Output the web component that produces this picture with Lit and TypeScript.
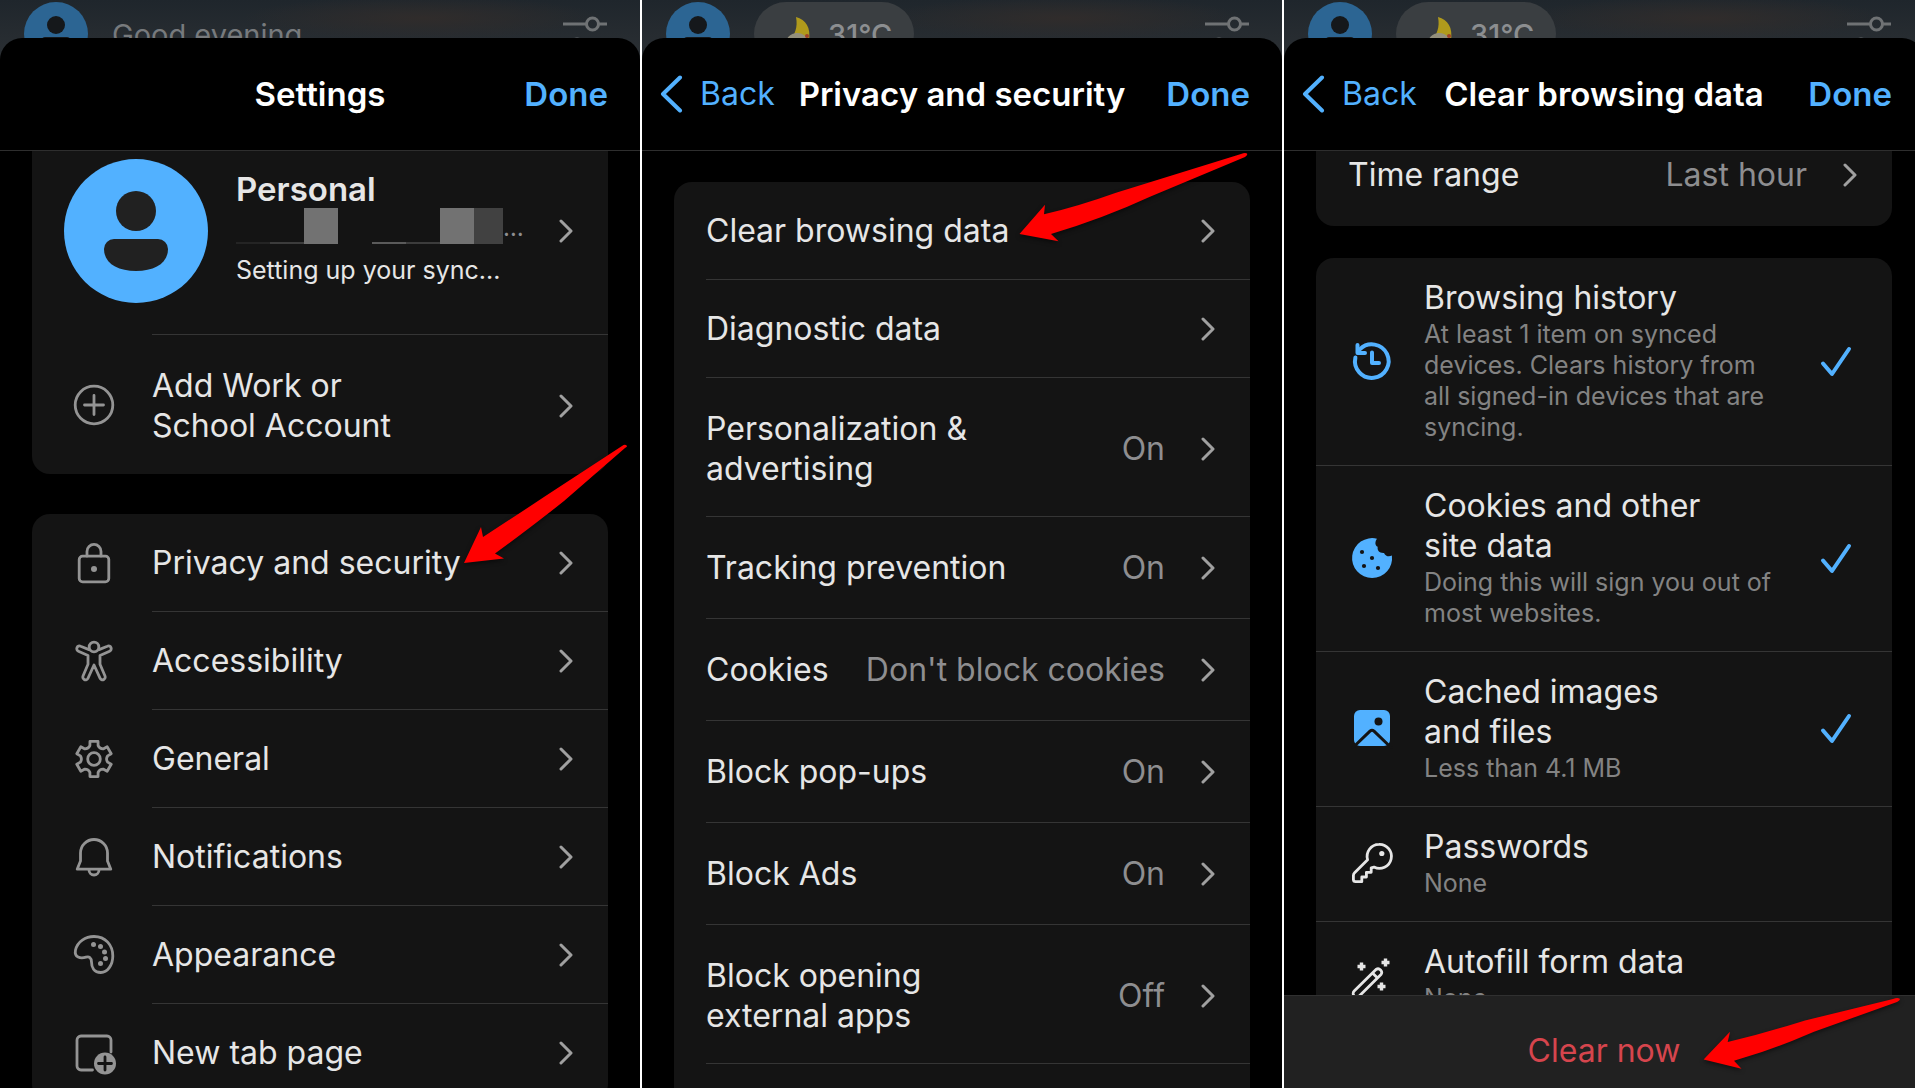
import { LitElement, html, svg, css, nothing } from "lit";
import { customElement, property } from "lit/decorators.js";

type Row = { label: string; icon?: string; value?: string; size?: string };
type Option = { label: string; note: string; icon: string; checked: boolean };

const accounts: Row[] = [{ label: "Add Work or\nSchool Account", icon: "add", size: "double" }];

const settings: Row[] = [
  { label: "Privacy and security", icon: "lock" },
  { label: "Accessibility", icon: "person" },
  { label: "General", icon: "gear" },
  { label: "Notifications", icon: "bell" },
  { label: "Appearance", icon: "palette" },
  { label: "New tab page", icon: "tab" },
];

const privacy: Row[] = [
  { label: "Clear browsing data" },
  { label: "Diagnostic data" },
  { label: "Personalization &\nadvertising", value: "On", size: "double" },
  { label: "Tracking prevention", value: "On", size: "roomy" },
  { label: "Cookies", value: "Don't block cookies", size: "roomy" },
  { label: "Block pop-ups", value: "On", size: "roomy" },
  { label: "Block Ads", value: "On", size: "roomy" },
  { label: "Block opening\nexternal apps", value: "Off", size: "double" },
  { label: "", size: "roomy" },
];

const options: Option[] = [
  {
    label: "Browsing history",
    note: "At least 1 item on synced\ndevices. Clears history from\nall signed-in devices that are\nsyncing.",
    icon: "history",
    checked: true,
  },
  {
    label: "Cookies and other\nsite data",
    note: "Doing this will sign you out of\nmost websites.",
    icon: "cookie",
    checked: true,
  },
  { label: "Cached images\nand files", note: "Less than 4.1 MB", icon: "image", checked: true },
  { label: "Passwords", note: "None", icon: "key", checked: false },
  { label: "Autofill form data", note: "None", icon: "wand", checked: false },
];

const gearPath = (() => {
  const pts: string[] = [];
  const at = (r: number, deg: number) => {
    const a = (deg * Math.PI) / 180;
    return `${(20 + r * Math.sin(a)).toFixed(2)} ${(20 - r * Math.cos(a)).toFixed(2)}`;
  };
  for (let i = 0; i < 6; i++) {
    const d = i * 60;
    pts.push(`${i ? "L" : "M"}${at(18, d - 13)}`, `L${at(18, d + 13)}`, `L${at(14, d + 17)}`);
    pts.push(`Q${at(11.5, d + 30)} ${at(14, d + 43)}`);
  }
  return pts.join("") + "Z";
})();

const glyphs: Record<string, unknown> = {
  add: svg`<circle cx="20" cy="20" r="18.8"/><path d="M20 10.5v19M10.5 20h19"/>`,
  lock: svg`<rect x="5.2" y="13.2" width="29.6" height="25.6" rx="3.4"/><path d="M13 13V8.4a7 7 0 0 1 14 0V13"/><circle class="dot" cx="20" cy="26" r="3"/>`,
  person: svg`<circle cx="20" cy="6" r="4.8"/><path d="M15 8.6 6.6 5.2a2.7 2.7 0 0 0-2.2 5l9.6 4.4v8.6L9 35a2.7 2.7 0 0 0 5 2.2L20 24l6 13.2a2.7 2.7 0 0 0 5-2.2L26 23.2v-8.6l9.6-4.4a2.7 2.7 0 0 0-2.2-5L25 8.6"/>`,
  gear: svg`<path d=${gearPath}/><circle cx="20" cy="20" r="6.3"/>`,
  bell: svg`<path d="M20 2.5a13.5 13.5 0 0 0-13.5 13.5v8L3.2 32.2h33.6L33.5 24v-8A13.5 13.5 0 0 0 20 2.5z"/><path d="M15 33a5 5 0 0 0 10 0"/>`,
  palette: svg`<path d="M1.5 15C3.5 6.5 11.5 1.5 20 1.5 31.5 1.5 38.8 10 38.8 21c0 9-5.300 16.500-12 16.500-7 0-9.300-5.500-9.300-10.500 0-4.500-2.500-5.800-5.500-4.800C6.500 24 0 22.500 1.500 15z"/><g class="dot"><circle cx="19.5" cy="9.5" r="2.5"/><circle cx="26.5" cy="11.5" r="2.5"/><circle cx="30.5" cy="17" r="2.5"/><circle cx="31.5" cy="23.5" r="2.5"/><circle cx="26.5" cy="28.5" r="2.5"/></g>`,
  tab: svg`<path d="M18.5 37H7a4 4 0 0 1-4-4V7a4 4 0 0 1 4-4h26a4 4 0 0 1 4 4v12"/><circle class="dot" cx="31" cy="30.5" r="11"/><path class="cut" d="M31 24v13M24.5 30.5h13"/>`,
  history: svg`<g class="bold"><path d="M3.4 16.5A16.8 16.8 0 1 0 8 8.2l-1.5 1.5"/><path d="M5.5 4v8h7.5"/><path d="M20 11.5V22h7"/></g>`,
  cookie: svg`<path class="dot" d="M25 .7A20 20 0 1 0 39.9 17.5c-2.4 1.5-6.4 1.2-7.9-2.5-4.5.3-7-2.5-6.3-6.2-3.2-1.6-2.6-5.6-.7-8.1z"/><g class="hole"><circle cx="10" cy="14" r="2.1"/><circle cx="20" cy="20" r="2.1"/><circle cx="12" cy="28" r="2.1"/><circle cx="26" cy="30" r="2.1"/></g>`,
  image: svg`<rect class="dot" x="2" y="2" width="36" height="36" rx="6"/><circle class="hole" cx="26.5" cy="13.5" r="4"/><path class="cut thick" d="M1 39.5 18 23.2q2-1.800 4 0L39 39.5"/>`,
  key: svg`<path d="M27 1.4a12 12 0 0 0-11.4 15.4L2.6 29.8a4 4 0 0 0-1.2 2.8V36.5a2.2 2.2 0 0 0 2.2 2.2h6.2V34h4.6v-4.7h4.8v-4.500l2.800-.700A12 12 0 1 0 27 1.400z"/><circle class="dot" cx="29.8" cy="10.5" r="2.6"/>`,
  wand: svg`<path d="M2.2 38a3.6 3.6 0 0 1 0-5L24 11.5a3.6 3.6 0 0 1 5 5L7.3 38a3.6 3.6 0 0 1-5.1 0zM20.5 15l5 5"/><path class="spark" d="M9.5 4.5v8M5.5 8.5h8M33.5.5v8M29.5 4.5h8M29.5 24.5v8M25.5 28.5h8"/>`,
};

const tokens = css`
  :host {
    --card: #141414;
    --line: #353535;
    --text: #e6e6e6;
    --muted: #8e8e90;
    --blue: #52b1ff;
  }
  * {
    box-sizing: border-box;
  }
`;

@customElement("line-icon")
class LineIcon extends LitElement {
  @property() name = "";
  static styles = css`
    :host {
      display: block;
      flex: none;
      width: 40px;
      height: 40px;
    }
    svg {
      display: block;
      overflow: visible;
      fill: none;
      stroke: currentColor;
      stroke-width: 2.8;
      stroke-linejoin: round;
      stroke-linecap: round;
    }
    .dot {
      fill: currentColor;
      stroke: none;
    }
    .hole {
      fill: #141414;
      stroke: none;
    }
    .cut {
      stroke: #141414;
    }
    .thick {
      stroke-width: 3;
    }
    .bold {
      stroke-width: 4;
    }
    .spark {
      stroke-width: 3.4;
      stroke-linecap: butt;
    }
  `;
  render() {
    return html`<svg width="40" height="40" viewBox="0 0 40 40" aria-hidden="true">${glyphs[this.name]}</svg>`;
  }
}

const chevron = html`<svg class="chevron" width="14" height="24" viewBox="0 0 14 24" aria-hidden="true">
  <path d="M2 2l10 10L2 22" fill="none" stroke="#a0a0a0" stroke-width="3" stroke-linecap="round" stroke-linejoin="round" />
</svg>`;

const arrow = (cls: string, w: number, h: number, d: string) => html`<svg
  class="arrow ${cls}"
  width=${w}
  height=${h}
  viewBox="0 0 ${w} ${h}"
  aria-hidden="true"
>
  <path d=${d} fill="#ff0000" />
</svg>`;

@customElement("phone-panel")
class PhonePanel extends LitElement {
  @property() heading = "";
  @property({ type: Boolean }) back = false;
  @property() greeting = "";
  @property() weather = "";

  static styles = [
    tokens,
    css`
      :host {
        display: flex;
        flex-direction: column;
        min-width: 0;
        height: 100%;
        position: relative;
        overflow: hidden;
        background: #000;
      }
      .backdrop {
        flex: none;
        height: 62px;
        margin-bottom: -24px;
        padding: 2px 32px 0 24px;
        display: flex;
        gap: 24px;
        overflow: hidden;
        background: radial-gradient(ellipse 180px 22px at 66% 18px, #302c2b, transparent),
          linear-gradient(#1f262c, #2c3034);
      }
      .avatar {
        flex: none;
      }
      .greeting {
        font-size: 29px;
        line-height: 34px;
        padding-top: 16px;
        color: #777a7d;
        white-space: nowrap;
      }
      .weather {
        display: flex;
        gap: 14px;
        width: 160px;
        height: 64px;
        padding: 15px 0 0 32px;
        border-radius: 32px;
        background: #3a3e41;
        font-size: 29px;
        line-height: 36px;
        font-weight: 500;
        color: #8c8e90;
      }
      .sliders {
        flex: none;
        margin: 12px 0 0 auto;
      }
      header {
        flex: none;
        position: relative;
        height: 113px;
        padding: 0 32px 0 17px;
        display: grid;
        grid-template-columns: 1fr auto 1fr;
        align-items: center;
        background: #000;
        border-bottom: 1px solid #2e2e2e;
        border-radius: 22px 22px 0 0;
      }
      h1 {
        margin: 0 0 0 15px;
        grid-column: 2;
        font-size: 33px;
        line-height: 40px;
        font-weight: 600;
        color: #fff;
        white-space: nowrap;
      }
      button {
        border: 0;
        padding: 0;
        background: none;
        font: inherit;
        font-size: 33px;
        line-height: 40px;
        color: var(--blue);
      }
      .back {
        display: flex;
        align-items: center;
        gap: 17px;
        justify-self: start;
        font-size: 32px;
      }
      .done {
        grid-column: 3;
        justify-self: end;
        font-weight: 600;
      }
      main {
        flex: 1;
        min-height: 0;
        overflow: hidden;
        padding: 0 32px;
      }
    `,
  ];

  render() {
    return html`
      <div class="backdrop">
        <svg class="avatar" width="64" height="64" viewBox="0 0 64 64" aria-hidden="true">
          <circle cx="32" cy="32" r="32" fill="#2c6593" />
          <circle cx="32" cy="23" r="9" fill="#15181b" />
          <path d="M18 38a3 3 0 0 1 3-3h22a3 3 0 0 1 3 3c0 8-6 12-14 12s-14-4-14-12z" fill="#15181b" />
        </svg>
        ${this.greeting ? html`<div class="greeting">${this.greeting}</div>` : nothing}
        ${this.weather
          ? html`<div class="weather">
              <svg width="28" height="36" viewBox="0 0 28 36" aria-hidden="true">
                <path d="M10 0c10 3 15 10 13 24H3C9 18 12 10 10 0z" fill="#b09a1c" />
                <path d="M1 22c4-7 14-8 19-2v16H1z" fill="#94907c" />
                <circle cx="21" cy="19" r="2" fill="#a0402a" />
              </svg>
              <span>${this.weather}</span>
            </div>`
          : nothing}
        <svg class="sliders" width="46" height="40" viewBox="0 0 46 40" fill="none" stroke="#6f7274" stroke-width="3" aria-hidden="true">
          <path d="M1 10h23M37 10h8M1 31h7M21 31h24" />
          <circle cx="30.5" cy="10" r="6" />
          <circle cx="15" cy="31" r="6" />
        </svg>
      </div>
      <header>
        ${this.back
          ? html`<button class="back">
              <svg width="24" height="38" viewBox="0 0 24 38" fill="none" stroke="#52b1ff" stroke-width="4" stroke-linecap="round" stroke-linejoin="round" aria-hidden="true">
                <path d="M21 2.5 4 19l17 16.5" />
              </svg>
              Back
            </button>`
          : nothing}
        <h1>${this.heading}</h1>
        <button class="done">Done</button>
      </header>
      <main><slot></slot></main>
      <slot name="footer"></slot>
      <slot name="overlay"></slot>
    `;
  }
}

@customElement("app-root")
class AppRoot extends LitElement {
  static styles = [
    tokens,
    css`
      :host {
        display: block;
        height: 100vh;
        overflow: hidden;
        background: #fff;
        color: var(--text);
        font-family: Inter, "Liberation Sans", sans-serif;
        font-size: 32px;
        line-height: 40px;
      }
      .panels {
        display: grid;
        grid-template-columns: 640fr 640fr 631fr;
        gap: 2px;
        height: 100%;
      }
      .last {
        margin-right: -9px;
      }
      .card {
        background: var(--card);
        border-radius: 18px;
        overflow: hidden;
      }
      .card + .card {
        margin-top: 40px;
      }
      .under {
        margin-top: -24px;
      }
      .first {
        margin-top: 31px;
      }
      .row {
        display: flex;
        align-items: center;
        width: 100%;
        height: 98px;
        padding: 0 0 0 32px;
        border: 0;
        background: none;
        color: inherit;
        font: inherit;
        text-align: left;
      }
      .body {
        flex: 1;
        height: 100%;
        display: flex;
        align-items: center;
        padding-right: 35px;
        border-bottom: 1px solid var(--line);
      }
      .row:last-child .body {
        border-color: transparent;
      }
      .row.roomy {
        height: 102px;
      }
      .row.double {
        height: 139px;
      }
      .double .body {
        padding-top: 3px;
      }
      .row line-icon {
        margin: 0 38px 0 10px;
        color: #949494;
      }
      .label {
        flex: 1;
        white-space: pre;
      }
      .value {
        color: var(--muted);
        white-space: nowrap;
      }
      .chevron {
        flex: none;
        margin-left: 36px;
      }
      .profile {
        display: grid;
        grid-template-columns: 144px 1fr auto;
        align-items: center;
        column-gap: 28px;
        width: 100%;
        height: 207px;
        padding: 0 35px 0 32px;
        border: 0;
        background: none;
        color: inherit;
        font: inherit;
        text-align: left;
      }
      .profile .chevron {
        margin-left: 0;
      }
      .who {
        display: grid;
        padding-bottom: 5px;
      }
      .name {
        font-size: 33px;
        line-height: 38px;
        font-weight: 600;
      }
      .mail {
        display: flex;
        align-items: flex-start;
        height: 47px;
        font-size: 24px;
        color: var(--muted);
      }
      .sync,
      .note {
        font-size: 25px;
        line-height: 31px;
        white-space: pre;
      }
      .rule {
        height: 1px;
        margin: 0 0 0 120px;
        border: 0;
        background: var(--line);
      }
      .time {
        margin-top: -27px;
      }
      .card.options {
        margin-top: 32px;
      }
      .option {
        display: flex;
        align-items: center;
        padding: 20px 40px 22px 36px;
        border-bottom: 1px solid var(--line);
      }
      .option line-icon {
        margin-right: 32px;
      }
      .checked line-icon,
      .tick {
        color: var(--blue);
      }
      .text {
        flex: 1;
        display: grid;
        gap: 1px;
      }
      .title {
        white-space: pre;
      }
      .note {
        color: #838383;
      }
      input {
        appearance: none;
        width: 0;
        height: 0;
        margin: 0;
      }
      .tick {
        visibility: hidden;
      }
      input:checked + .tick {
        visibility: visible;
      }
      .clear {
        flex: none;
        position: relative;
        height: 93px;
        padding: 18px 0 0;
        border: 0;
        border-top: 1px solid #303030;
        background: #212121;
        color: #d6454d;
        font: inherit;
      }
      .arrow {
        position: absolute;
        overflow: visible;
        filter: drop-shadow(0 2px 2px rgba(0, 0, 0, 0.5));
      }
      .one {
        left: 464px;
        top: 444px;
      }
      .two {
        left: 377px;
        top: 152px;
      }
      .three {
        left: 419px;
        top: 997px;
      }
    `,
  ];

  private row(r: Row) {
    return html`<button class="row ${r.size ?? ""}">
      ${r.icon ? html`<line-icon name=${r.icon}></line-icon>` : nothing}
      <span class="body">
        <span class="label">${r.label}</span>
        ${r.value ? html`<span class="value">${r.value}</span>` : nothing} ${chevron}
      </span>
    </button>`;
  }

  private option(o: Option) {
    return html`<label class="option ${o.checked ? "checked" : ""}">
      <line-icon name=${o.icon}></line-icon>
      <span class="text"><span class="title">${o.label}</span><span class="note">${o.note}</span></span>
      <input type="checkbox" .checked=${o.checked} />
      <svg class="tick" width="32" height="32" viewBox="0 0 32 32" fill="none" stroke="currentColor" stroke-width="4" stroke-linecap="round" stroke-linejoin="round" aria-hidden="true">
        <path d="M3 18.5 12 29 29 4" />
      </svg>
    </label>`;
  }

  render() {
    return html`<div class="panels">
      <phone-panel heading="Settings" greeting="Good evening">
        <section class="card under">
          <button class="profile">
            <svg width="144" height="144" viewBox="0 0 144 144" aria-hidden="true">
              <circle cx="72" cy="72" r="72" fill="#52b1ff" />
              <circle cx="72" cy="52" r="20" fill="#212121" />
              <path d="M40 90a10 10 0 0 1 10-10h44a10 10 0 0 1 10 10c0 14-13 22-32 22s-32-8-32-22z" fill="#212121" />
            </svg>
            <span class="who">
              <span class="name">Personal</span>
              <span class="mail">
                <svg width="267" height="36" viewBox="0 0 267 36" aria-hidden="true">
                  <path d="M0 34h34v2H0z" fill="#242424" />
                  <path d="M34 34h34v2H34zM170 34h34v2H170z" fill="#3c3c3c" />
                  <path d="M136 34h34v2H136z" fill="#5a5a5a" />
                  <path d="M68 0h34v36H68zM204 0h34v36H204z" fill="#727272" />
                  <path d="M238 0h29v36H238z" fill="#414141" />
                </svg>
                <span>…</span>
              </span>
              <span class="sync">Setting up your sync...</span>
            </span>
            ${chevron}
          </button>
          <hr class="rule" />
          ${accounts.map((r) => this.row(r))}
        </section>
        <section class="card">${settings.map((r) => this.row(r))}</section>
        <div slot="overlay">
          ${arrow("one", 164, 118, "M162.5 1.5Q161 0 158 2L83 51Q50 73 19 93L17 83 0 119 40 114.6 31 109.6Q70 81 100 57L161 4Q164 2.5 162.5 1.5z")}
        </div>
      </phone-panel>

      <phone-panel heading="Privacy and security" weather="31°C" back>
        <section class="card first">${privacy.map((r) => this.row(r))}</section>
        <div slot="overlay">
          ${arrow("two", 230, 92, "M228 1.5Q226 .5 222 2L97 40.7Q60 54 25 62.3L26 52.7 .5 82 39.5 89.3 32 82Q85 66 131 44.7L226 5Q229 3 228 1.5z")}
        </div>
      </phone-panel>

      <phone-panel class="last" heading="Clear browsing data" weather="31°C" back>
        <section class="card time">${this.row({ label: "Time range", value: "Last hour", size: "roomy" })}</section>
        <section class="card options">${options.map((o) => this.option(o))}</section>
        <button slot="footer" class="clear">Clear now</button>
        <div slot="overlay">
          ${arrow("three", 200, 74, "M196.5 1.5Q194 .5 190 2L102 23.4Q62 36 24.7 45L27 34.8 .6 62.5 38.5 71.8 31 63.7Q72 52 111 34.8L194 5Q198 3 196.5 1.5z")}
        </div>
      </phone-panel>
    </div>`;
  }
}
